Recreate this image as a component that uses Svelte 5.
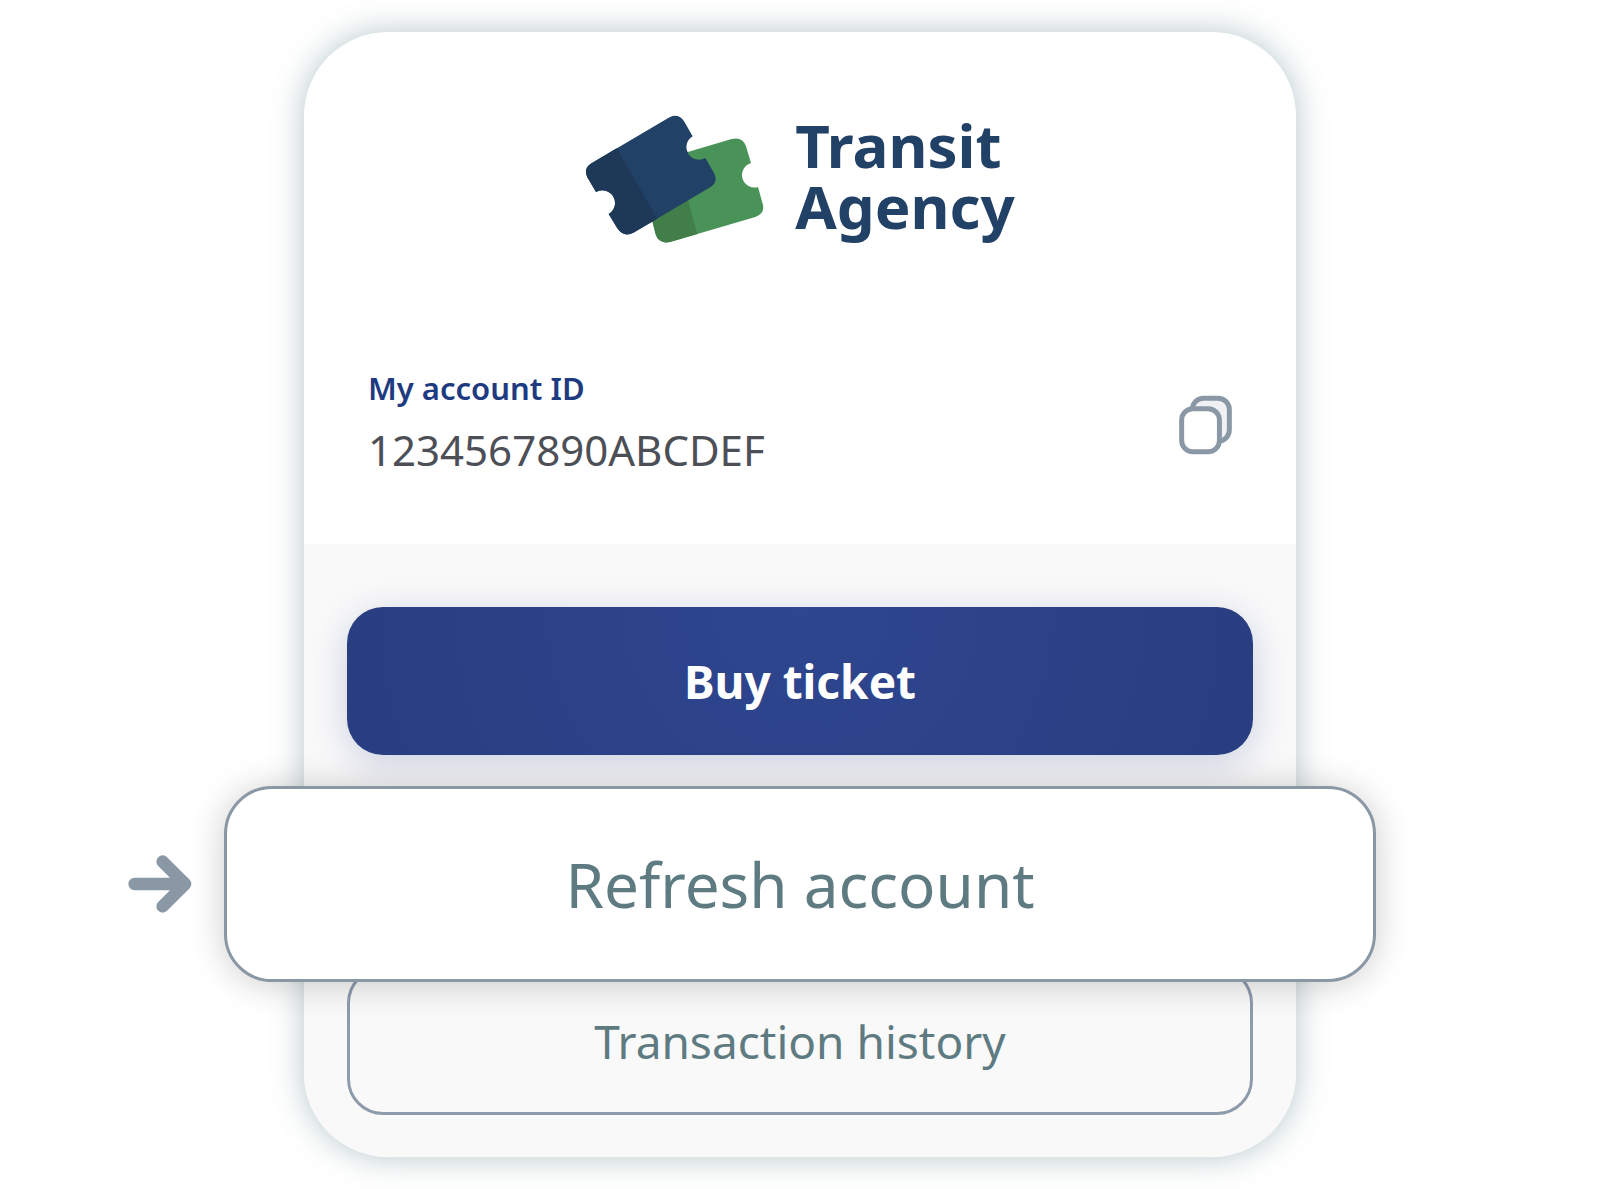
<script lang="ts">
  const accountId = "1234567890ABCDEF"

  function copyId() {
    navigator.clipboard?.writeText(accountId)
  }
</script>

<main class="stage">
  <section class="card">
    <header class="brand">
      <svg class="tickets" viewBox="45 44 540 384" aria-hidden="true">
        <path
          fill="#4a9358"
          d="M300 171 L485 116 Q518 108 528 138 L543 188 A37 37 0 0 0 564 260 L579 314 Q584 340 556 350 L300 425 Q266 432 257 402 L240 335 Z"
        />
        <path fill="#417e4a" d="M345 266 L382 401 L300 425 Q266 432 257 402 L240 335 Z" />
        <path
          fill="#224166"
          d="M62 190 L296 52 Q325 36 343 64 L368 108 A37 37 0 0 0 406 173 L432 218 Q446 244 422 260 L190 397 Q161 412 142 384 L116 341 A37 37 0 0 0 78 275 L52 231 Q40 205 62 190 Z"
        />
        <path
          fill="#1e3857"
          d="M62 190 L140 144 L262 355 L190 397 Q161 412 142 384 L116 341 A37 37 0 0 0 78 275 L52 231 Q40 205 62 190 Z"
        />
      </svg>
      <h1 class="name">Transit<br />Agency</h1>
    </header>

    <div class="account">
      <dl class="id">
        <dt>My account ID</dt>
        <dd>{accountId}</dd>
      </dl>
      <button class="copy" aria-label="Copy account ID" on:click={copyId}>
        <svg viewBox="57 44 160 180">
          <rect x="97" y="53" width="112" height="130" rx="34" fill="#f0f1f5" />
          <rect x="65" y="85" width="114" height="130" rx="34" fill="#fff" />
        </svg>
      </button>
    </div>

    <div class="actions">
      <button class="action buy">Buy ticket</button>
      <div class="callout">
        <svg class="arrow" viewBox="53 284 194 176" aria-hidden="true">
          <path d="M73 372 H226 M158 304 L226 372 L158 440" />
        </svg>
        <button class="action refresh">Refresh account</button>
      </div>
      <button class="action history">Transaction history</button>
    </div>
  </section>
</main>

<style>
  :global(body) {
    background: #fff;
  }

  .stage {
    padding: 32px 0;
    font-family: "Noto Sans", "Open Sans", sans-serif;
  }

  .card {
    box-sizing: border-box;
    width: 62%;
    margin: 0 auto;
    border-radius: 84px;
    background: #fff;
    box-shadow: 0 0 32px rgba(80, 120, 125, 0.42);
  }

  .brand {
    display: flex;
    justify-content: center;
    align-items: center;
    gap: 30px;
    padding-top: 83px;
  }

  .tickets {
    width: 180px;
    height: 128px;
  }

  .name {
    margin: 0;
    padding-bottom: 6px;
    color: #224166;
    font-size: 60px;
    font-weight: 700;
    line-height: 61px;
  }

  .account {
    display: flex;
    justify-content: space-between;
    align-items: center;
    padding: 120px 64px 57px;
  }

  .id,
  .id dd {
    margin: 0;
  }

  .id dt {
    color: #1e3a80;
    font-size: 31px;
    font-weight: 600;
    line-height: 50px;
  }

  .id dd {
    color: #4d4f57;
    font-size: 42px;
    line-height: 74px;
  }

  .copy {
    padding: 0;
    border: 0;
    background: none;
  }

  .copy svg {
    display: block;
    width: 53px;
    height: 60px;
    fill: none;
    stroke: #8a98a5;
    stroke-width: 15;
  }

  .actions {
    display: flex;
    flex-direction: column;
    padding: 63px 43px 42px;
    border-radius: 0 0 84px 84px;
    background: #f9f9f9;
  }

  .action {
    height: 148px;
    padding: 0;
    border: 3px solid #8e9bab;
    border-radius: 36px;
    background: none;
    color: #5f7b82;
    font-family: inherit;
    font-size: 46px;
  }

  .buy {
    border: 0;
    background: radial-gradient(circle at 50% 0, #2e4690, #293e80 480px);
    box-shadow: 0 8px 36px rgba(45, 65, 150, 0.22);
    color: #fff;
    font-weight: 700;
  }

  .callout {
    position: relative;
    display: flex;
    align-items: center;
    gap: 32px;
    margin: 31px -123px -15px -219px;
  }

  .arrow {
    flex: none;
    width: 64px;
    height: 58px;
    fill: none;
    stroke: #8a98a5;
    stroke-width: 38;
    stroke-linecap: round;
    stroke-linejoin: round;
  }

  .refresh {
    flex: 1;
    height: 196px;
    border-color: #8a98a5;
    border-radius: 48px;
    background: #fff;
    box-shadow: 0 2px 36px rgba(0, 0, 0, 0.2);
    font-size: 62px;
  }
</style>
